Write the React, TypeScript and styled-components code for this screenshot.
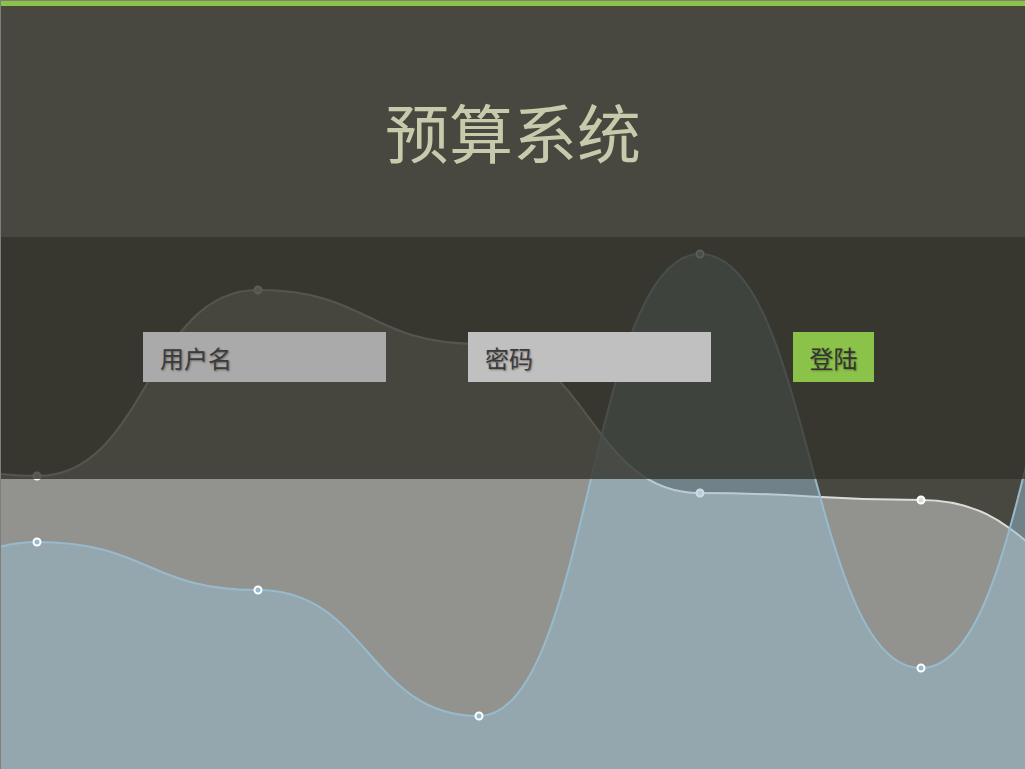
import React from "react";
import styled, { createGlobalStyle } from "styled-components";

type Point = { x: number; y: number };

type SeriesType = {
  data: Array<number>;
  stroke: string;
  fill: string;
};

// chart points sit one step apart, the first one lies left of the window
const STEP = 221;
const FIRST_X = -184;
const BASE_Y = 800;

const series: Array<SeriesType> = [
  {
    data: [430, 476, 290, 344, 493, 500, 591],
    stroke: "rgba(220,220,220,1)",
    fill: "rgba(220,220,220,0.5)",
  },
  {
    data: [651, 542, 590, 716, 254, 668, 220],
    stroke: "rgba(151,187,205,1)",
    fill: "rgba(151,187,205,0.5)",
  },
];

function toPoints(data: Array<number>): Array<Point> {
  return data.map((y, i) => ({ x: FIRST_X + STEP * i, y }));
}

function linePath(points: Array<Point>) {
  let d = `M${points[0].x} ${points[0].y}`;
  for (let i = 1; i < points.length; i++) {
    const prev = points[i - 1];
    const cur = points[i];
    const mid = (prev.x + cur.x) / 2;
    d += ` C${mid} ${prev.y} ${mid} ${cur.y} ${cur.x} ${cur.y}`;
  }
  return d;
}

function areaPath(points: Array<Point>) {
  const last = points[points.length - 1];
  return `${linePath(points)} L${last.x} ${BASE_Y} L${points[0].x} ${BASE_Y} Z`;
}

function Series(props: SeriesType) {
  const points = toPoints(props.data);
  return (
    <g>
      <path d={linePath(points)} fill="none" stroke={props.stroke} strokeWidth={2} />
      <path d={areaPath(points)} fill={props.fill} stroke="none" />
      {points.map((p) => (
        <circle
          key={p.x}
          cx={p.x}
          cy={p.y}
          r={3.5}
          fill={props.stroke}
          stroke="#fff"
          strokeWidth={2}
        />
      ))}
    </g>
  );
}

export default function App() {
  return (
    <>
      <GlobalStyle />
      <Page>
        <ChartLayer>
          <g transform="translate(-1 -1)">
            {series.map((s, i) => (
              <Series key={i} {...s} />
            ))}
          </g>
        </ChartLayer>
        <Header>
          <Title>预算系统</Title>
        </Header>
        <LoginBand>
          <Field $tone="#aaaaaa" type="text" placeholder="用户名" />
          <Field $tone="#c0c0c0" type="password" placeholder="密码" />
          <LoginButton type="button">登陆</LoginButton>
        </LoginBand>
      </Page>
    </>
  );
}

const GlobalStyle = createGlobalStyle`
  html, body {
    margin: 0;
    padding: 0;
    background: #484840;
  }
  body {
    font-family: "Noto Sans CJK SC", "Noto Sans", sans-serif;
  }
`;

const Page = styled.div`
  position: relative;
  min-height: 100vh;
  box-sizing: border-box;
  border-top: 1px solid #7e7e7a;
  border-left: 1px solid #7e7e7a;
  background: #484840;
  overflow: hidden;
`;

const ChartLayer = styled.svg`
  position: absolute;
  top: 0;
  left: 0;
  width: 100%;
  height: 100%;
  display: block;
  z-index: 0;
`;

const Header = styled.header`
  position: relative;
  z-index: 1;
  height: 236px;
  box-sizing: border-box;
  border-top: 5px solid #8bc34a;
  padding-top: 92px;
  text-align: center;
`;

const Title = styled.h1`
  margin: 0;
  font-size: 64px;
  line-height: 64px;
  font-weight: 400;
  color: #c7cbab;
`;

const LoginBand = styled.section`
  position: relative;
  z-index: 1;
  height: 242px;
  box-sizing: border-box;
  padding: 95px 0 0 142px;
  display: flex;
  align-items: flex-start;
  gap: 82px;
  background: rgba(51, 51, 43, 0.8);
`;

const Field = styled.input<{ $tone: string }>`
  width: 243px;
  height: 50px;
  box-sizing: border-box;
  margin: 0;
  padding: 0 17px;
  border: 0;
  outline: none;
  background: ${({ $tone }) => $tone};
  font-family: "Noto Sans CJK SC", "Noto Sans", sans-serif;
  font-size: 24px;
  color: #333;

  &::placeholder {
    color: #3b3b3b;
    opacity: 1;
    text-shadow: 1px 1px 2px rgba(0, 0, 0, 0.4);
  }
`;

const LoginButton = styled.button`
  height: 50px;
  min-width: 81px;
  margin: 0;
  padding: 0 16px;
  border: 0;
  background: #8bc34a;
  font-family: "Noto Sans CJK SC", "Noto Sans", sans-serif;
  font-size: 24px;
  color: #333;
  text-shadow: 1px 1px 2px rgba(0, 0, 0, 0.35);
  cursor: pointer;
`;
